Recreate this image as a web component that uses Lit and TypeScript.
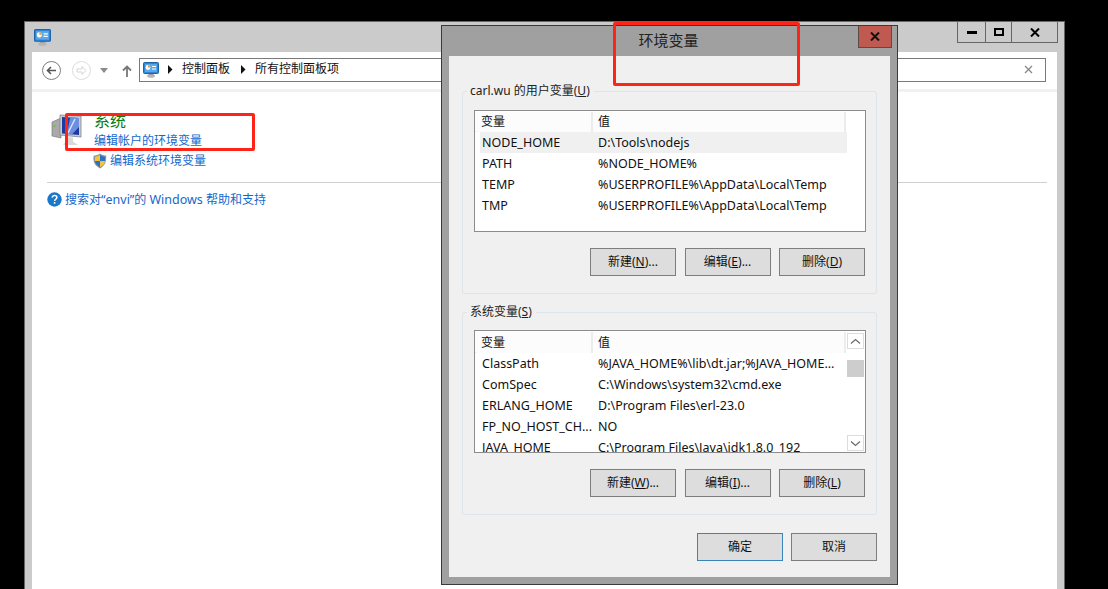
import { LitElement, html, css, svg } from "lit";
import { customElement } from "lit/decorators.js";

const cpIcon = (size: number) => html`<svg class="ico" width=${size} height=${size} viewBox="0 0 16 16">
  <ellipse cx="8" cy="14" rx="4" ry="1.800" fill="#b5b5b5"/>
  <rect x="5.500" y="11" width="5" height="2" fill="#9a9a9a"/>
  <rect x="0.500" y="0.500" width="15" height="11" rx="1" fill="#2f86d6" stroke="#1f64a8"/>
  <rect x="2" y="2" width="12" height="8" fill="#5aa9ea"/>
  <circle cx="5" cy="5.500" r="2.400" fill="#fff"/>
  <path d="M5 3.100a2.400 2.400 0 0 1 2.400 2.400H5z" fill="#f0992a"/>
  <path d="M9 4.500h4M9 7h4" stroke="#fff" stroke-width="1.200"/>
</svg>`;

const sysIcon = html`<svg width="32" height="36" viewBox="0 0 32 36">
  <path d="M1 9l9-4v20l-9-2z" fill="#a9a9a9" stroke="#6f6f6f" stroke-width=".6"/>
  <rect x="2.500" y="12" width="2" height="2" fill="#6bbf4a"/>
  <path d="M9 2l21 1v21l-21-2z" fill="#c9cdd2" stroke="#7f858c" stroke-width=".8"/>
  <path d="M11 4l17 1v17l-17-1.500z" fill="#1c3aa0"/>
  <path d="M19 4.400l9 .6v9l-7 7.600-5-.4z" fill="#6d8fe0"/>
  <path d="M24 6l-7 14" stroke="#dfe7fb" stroke-width="1.400"/>
  <path d="M15 24l7 .5v4l5 3.500H12l3-3.500z" fill="#d9d9d9"/>
</svg>`;

const shield = html`<svg width="14" height="16" viewBox="0 0 14 16">
  <path d="M7 .5c2 1.400 4 2 6.200 2 .3 5.500-.8 10.500-6.200 13C1.600 13-.5 8 .8 2.500 3 2.500 5 1.900 7 .5z" fill="#8d96a0"/>
  <path d="M7 2c1.700 1 3.300 1.600 5 1.700V8H7z" fill="#2e6fc8"/>
  <path d="M7 2v6H2V3.700C3.700 3.600 5.300 3 7 2z" fill="#f4c534"/>
  <path d="M2 8h5v6C4 12.500 2.400 11 2 8z" fill="#2e6fc8"/>
  <path d="M7 8h5c-.3 3-2 4.800-5 6z" fill="#f4c534"/>
</svg>`;

const help = html`<svg width="15" height="15" viewBox="0 0 15 15">
  <circle cx="7.500" cy="7.500" r="7.200" fill="#1a78c8"/>
  <path d="M5.200 5.600c.2-1.400 1.200-2 2.400-2 1.400 0 2.300.8 2.300 1.900 0 1.700-2.300 1.700-2.300 3.500" fill="none" stroke="#fff" stroke-width="1.500"/>
  <rect x="6.800" y="10" width="1.600" height="1.700" fill="#fff"/>
</svg>`;

const tri = (next = false) => html`<svg class="crumb ${next ? "next" : ""}" width="5" height="9" viewBox="0 0 5 9"><path d="M0 0l4.500 4.500L0 9z" fill="#111"/></svg>`;

const chevron = (d: string) => svg`<svg width="11" height="7" viewBox="0 0 11 7"><path d=${d} fill="none" stroke="#6a6a6a" stroke-width="1.200"/></svg>`;

type Row = [string, string];

@customElement("app-root")
export class AppRoot extends LitElement {
  static styles = css`
    :host {
      display: block;
      position: relative;
      width: 1108px;
      height: 589px;
      overflow: hidden;
      background: #000;
      font: 12px/16px "Noto Sans", "Noto Sans CJK SC", sans-serif;
      color: #111;
    }
    .window {
      position: absolute;
      left: 24px;
      top: 21px;
      width: 1041px;
      height: 580px;
      box-sizing: border-box;
      border: 1px solid #666;
      background: #cbcbcb;
      display: flex;
      flex-direction: column;
    }
    .win-title {
      height: 30px;
      flex: none;
      display: flex;
      justify-content: space-between;
      padding: 0 6px 0 9px;
    }
    .win-title .ico { margin-top: 7px; }
    .caption {
      display: flex;
      height: 21px;
      box-sizing: border-box;
      border: 1px solid #666;
      border-top: none;
    }
    .caption div {
      display: flex;
      align-items: center;
      justify-content: center;
      border-left: 1px solid #666;
    }
    .caption div:first-child { border-left: none; width: 27px; }
    .caption div:nth-child(2) { width: 25px; }
    .caption div:nth-child(3) { width: 45px; }
    .win-body {
      flex: 1;
      margin: 0 7px;
      background: #fff;
      display: flex;
      flex-direction: column;
    }
    .toolbar {
      height: 37px;
      flex: none;
      display: flex;
      align-items: center;
      padding-left: 10px;
      box-sizing: border-box;
    }
    .nav { flex: none; }
    .nav.gap-fwd { margin-left: 11px; }
    .nav.gap-drop { margin-left: 9px; }
    .nav.gap-up { margin-left: 14px; }
    .address {
      margin-left: 7px;
      margin-bottom: 2px;
      width: 907px;
      height: 24px;
      box-sizing: border-box;
      border: 1px solid #7a7a7a;
      display: flex;
      align-items: center;
      padding-left: 3px;
      font-size: 12px;
    }
    .address span { margin-bottom: 1px; }
    .crumb { margin: 0 9px 0 9px; flex: none; }
    .crumb.next { margin: 0 9px 0 11px; }
    .addr-spacer { flex: 1; }
    .clear { margin-right: 12px; }
    .tool-sep { height: 3px; background: #f1f1f1; flex: none; }
    .panel { padding: 20px 10px 0 15px; display: flex; flex-direction: column; }
    .result { display: flex; padding-left: 4px; }
    .result-icon { width: 43px; flex: none; padding-top: 1px; }
    .result-title { font-size: 16px; line-height: 19px; color: #0a7a0a; }
    .link { color: #1468cc; font-size: 12px; line-height: 19px; }
    .result-links { display: flex; flex-direction: column; }
    .secure { display: flex; align-items: center; gap: 3px; margin-left: -1px; margin-top: 1px; }
    .panel-sep { height: 1px; background: #cfcfcf; margin-top: 12px; }
    .help { display: flex; align-items: center; gap: 3px; margin-top: 7px; }
    .lat { font-size: 12.5px; }

    .dialog {
      position: absolute;
      left: 441px;
      top: 25px;
      width: 457px;
      height: 560px;
      box-sizing: border-box;
      border: 1px solid #3a3a3a;
      background: #a0a0a0;
      display: flex;
      flex-direction: column;
    }
    .dlg-title {
      height: 30px;
      flex: none;
      display: flex;
      align-items: center;
      justify-content: center;
      font-size: 15px;
      color: #222;
      padding: 0 2px 2px 0;
      box-sizing: border-box;
    }
    .dlg-close {
      position: absolute;
      right: 5px;
      top: 0;
      width: 34px;
      height: 22px;
      box-sizing: border-box;
      background: #c0594f;
      border: 1px solid #5a4a48;
      border-top: none;
      display: flex;
      align-items: center;
      justify-content: center;
    }
    .dlg-body {
      flex: 1;
      margin: 0 7px 7px;
      background: #f0f0f0;
      padding: 27px 13px 0;
      display: flex;
      flex-direction: column;
    }
    fieldset {
      margin: 0;
      padding: 11px 10px 17px 11px;
      border: 1px solid #dde4ea;
      border-radius: 3px;
      min-width: 0;
      box-sizing: border-box;
    }
    fieldset + fieldset { margin-top: 10px; padding-top: 10px; }
    legend { padding: 0 4px 0 3px; margin-left: -7px; line-height: 16px; font-size: 12px; color: #222; }
    .list {
      height: 122px;
      box-sizing: border-box;
      border: 1px solid #8c8c8c;
      background: #fff;
      overflow: hidden;
      position: relative;
    }
    .list.tall { height: 123px; }
    .list-head {
      display: grid;
      grid-template-columns: 117px 253px 1fr;
      height: 21px;
      padding: 1px 0 0 1px;
      box-sizing: border-box;
      border-bottom: 1px solid #e6e6e6;
    }
    .list.tall .list-head { height: 22px; }
    .list-head div {
      background: #fcfcfc;
      border-right: 2px solid #ececec;
      padding-left: 5px;
      line-height: 20px;
    }
    .list.tall .list-head div { line-height: 21px; }
    .list-head div:last-child { border: none; background: #fff; }
    .row {
      display: grid;
      grid-template-columns: 118px 249px;
      width: 367px;
      height: 21px;
      line-height: 21px;
      margin-left: 5px;
      white-space: nowrap;
      font-size: 12.5px;
    }
    .row.sel { background: #f0f0f0; }
    .row span { padding-left: 2px; overflow: hidden; }
    .row span + span { padding-left: 0; }
    .scroll {
      position: absolute;
      right: 1px;
      top: 2px;
      bottom: 1px;
      width: 17px;
      display: flex;
      flex-direction: column;
      background: #fff;
    }
    .sb-btn {
      height: 16px;
      flex: none;
      box-sizing: border-box;
      border: 1px solid #dcdcdc;
      display: flex;
      align-items: center;
      justify-content: center;
    }
    .sb-track { flex: 1; padding-top: 11px; }
    .sb-thumb { height: 17px; background: #cdcdcd; }
    .btns { display: flex; justify-content: flex-end; gap: 8.5px; margin-top: 16px; padding-right: 1px; }
    button {
      width: 86px;
      height: 28px;
      box-sizing: border-box;
      padding: 0;
      border: 1px solid #7d7d7d;
      border-radius: 0;
      background: #dddddd;
      font: inherit;
      color: #111;
    }
    button.default { border-color: #3a85b8; }
    .dlg-foot { display: flex; justify-content: flex-end; gap: 8px; margin-top: 18px; }

    .mark {
      position: absolute;
      box-sizing: border-box;
      border: 3px solid #ff2418;
      border-radius: 2px;
    }
    .mark.a { left: 65px; top: 113px; width: 190px; height: 38px; }
    .mark.b { left: 613px; top: 22px; width: 187px; height: 64px; }
  `;

  private list(rows: Row[], scroll = false) {
    return html`<div class="list ${scroll ? "tall" : ""}">
      <div class="list-head"><div>变量</div><div>值</div><div></div></div>
      ${rows.map(
        (r, i) => html`<div class="row ${!scroll && i === 0 ? "sel" : ""}"><span>${r[0]}</span><span>${r[1]}</span></div>`
      )}
      ${scroll
        ? html`<div class="scroll">
            <div class="sb-btn">${chevron("M1 5.500l4.500-4 4.500 4")}</div>
            <div class="sb-track"><div class="sb-thumb"></div></div>
            <div class="sb-btn">${chevron("M1 1.500l4.500 4 4.500-4")}</div>
          </div>`
        : ""}
    </div>`;
  }

  private btn(label: string, key: string, tail: string) {
    return html`<button>${label}(<u>${key}</u>)${tail}</button>`;
  }

  render() {
    return html`
      <div class="window">
        <div class="win-title">
          ${cpIcon(17)}
          <div class="caption">
            <div><svg width="10" height="3"><rect width="10" height="3" fill="#000"/></svg></div>
            <div><svg width="10" height="8"><rect x="1" y="1" width="8" height="6" fill="none" stroke="#000" stroke-width="2"/></svg></div>
            <div><svg width="10" height="9" viewBox="0 0 10 9"><path d="M1 .5l8 8M9 .5l-8 8" stroke="#000" stroke-width="2"/></svg></div>
          </div>
        </div>
        <div class="win-body">
          <div class="toolbar">
            <svg class="nav" width="19" height="19" viewBox="0 0 19 19">
              <circle cx="9.500" cy="9.500" r="9" fill="#fff" stroke="#7d7d7d"/>
              <path d="M14 9.500H6M9 6l-3.500 3.500L9 13" fill="none" stroke="#555" stroke-width="1.600"/>
            </svg>
            <svg class="nav gap-fwd" width="19" height="19" viewBox="0 0 19 19">
              <circle cx="9.500" cy="9.500" r="9" fill="#fff" stroke="#dcdcdc"/>
              <path d="M5 8h5V5.500l4 4-4 4V11H5z" fill="none" stroke="#d4d4d4"/>
            </svg>
            <svg class="nav gap-drop" width="8" height="5" viewBox="0 0 8 5"><path d="M0 0h8L4 5z" fill="#8a8a8a"/></svg>
            <svg class="nav gap-up" width="10" height="12" viewBox="0 0 10 12">
              <path d="M5 12V1.500M1 5.500l4-4 4 4" fill="none" stroke="#777" stroke-width="1.800"/>
            </svg>
            <div class="address">
              ${cpIcon(16)}
              ${tri()}<span>控制面板</span>${tri(true)}<span>所有控制面板项</span>
              <span class="addr-spacer"></span>
              <svg class="clear" width="9" height="9" viewBox="0 0 9 9"><path d="M1 1l7 7M8 1l-7 7" stroke="#888" stroke-width="1.300"/></svg>
            </div>
          </div>
          <div class="tool-sep"></div>
          <div class="panel">
            <div class="result">
              <div class="result-icon">${sysIcon}</div>
              <div class="result-links">
                <div class="result-title">系统</div>
                <div class="link">编辑帐户的环境变量</div>
                <div class="link secure">${shield}<span>编辑系统环境变量</span></div>
              </div>
            </div>
            <div class="panel-sep"></div>
            <div class="help link">${help}<span>搜索对<span class="lat">“envi”</span>的 <span class="lat">Windows</span> 帮助和支持</span></div>
          </div>
        </div>
      </div>

      <div class="dialog">
        <div class="dlg-title">环境变量</div>
        <div class="dlg-close">
          <svg width="10" height="9" viewBox="0 0 10 9"><path d="M1 .5l8 8M9 .5l-8 8" stroke="#111" stroke-width="2"/></svg>
        </div>
        <div class="dlg-body">
          <fieldset>
            <legend>carl.wu 的用户变量(<u>U</u>)</legend>
            ${this.list([
              ["NODE_HOME", "D:\\Tools\\nodejs"],
              ["PATH", "%NODE_HOME%"],
              ["TEMP", "%USERPROFILE%\\AppData\\Local\\Temp"],
              ["TMP", "%USERPROFILE%\\AppData\\Local\\Temp"],
            ])}
            <div class="btns">
              ${this.btn("新建", "N", "...")}${this.btn("编辑", "E", "...")}${this.btn("删除", "D", "")}
            </div>
          </fieldset>
          <fieldset>
            <legend>系统变量(<u>S</u>)</legend>
            ${this.list(
              [
                ["ClassPath", "%JAVA_HOME%\\lib\\dt.jar;%JAVA_HOME..."],
                ["ComSpec", "C:\\Windows\\system32\\cmd.exe"],
                ["ERLANG_HOME", "D:\\Program Files\\erl-23.0"],
                ["FP_NO_HOST_CH...", "NO"],
                ["JAVA_HOME", "C:\\Program Files\\Java\\jdk1.8.0_192"],
              ],
              true
            )}
            <div class="btns">
              ${this.btn("新建", "W", "...")}${this.btn("编辑", "I", "...")}${this.btn("删除", "L", "")}
            </div>
          </fieldset>
          <div class="dlg-foot">
            <button class="default">确定</button>
            <button>取消</button>
          </div>
        </div>
      </div>

      <div class="mark a"></div>
      <div class="mark b"></div>
    `;
  }
}
